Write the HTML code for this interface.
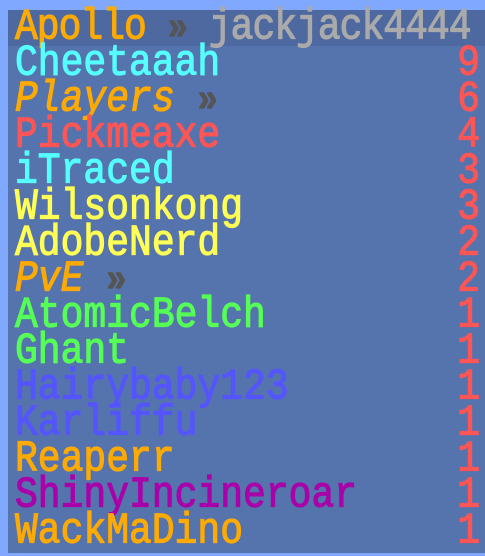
<!DOCTYPE html>
<html><head><style>
html,body{margin:0;padding:0;}
body{width:485px;height:556px;background:#80a8ff;position:relative;overflow:hidden;
font-family:"Liberation Mono","DejaVu Sans Mono",monospace;font-size:38px;}
#p{position:absolute;left:8px;top:10px;width:477px;height:543px;background:#5573ad;}
#h{position:absolute;left:0;top:0;width:477px;height:36px;background:#4e69a0;}
.r{position:absolute;left:7px;right:5px;height:36px;line-height:36px;white-space:nowrap;-webkit-text-stroke:1px currentColor;}
.t{display:inline-block;transform:translateY(2px) scaleY(1.14);transform-origin:50% 80%;}
.n{position:absolute;right:0;top:0;color:#ff5555;}
.i{font-style:italic}
.g{color:#555555;font-size:34px;font-weight:bold}
</style></head><body>
<div id="p">
<div id="h"></div>
<div class="r" style="top:0"><span class="t" style="letter-spacing:-1px"><span style="color:#ffaa00">Apollo</span> <span class="g">»</span> <span style="color:#aaaaaa">jackjack4444</span></span></div>
<div class="r" style="top:36px"><span class="t" style="color:#55ffff">Cheetaaah</span><span class="n t">9</span></div>
<div class="r" style="top:72px"><span class="t i" style="color:#ffaa00">Players <span class="g" style="font-style:normal">»</span></span><span class="n t">6</span></div>
<div class="r" style="top:108px"><span class="t" style="color:#ff5555">Pickmeaxe</span><span class="n t">4</span></div>
<div class="r" style="top:144px"><span class="t" style="color:#55ffff">iTraced</span><span class="n t">3</span></div>
<div class="r" style="top:180px"><span class="t" style="color:#ffff55">Wilsonkong</span><span class="n t">3</span></div>
<div class="r" style="top:216px"><span class="t" style="color:#ffff55">AdobeNerd</span><span class="n t">2</span></div>
<div class="r" style="top:252px"><span class="t i" style="color:#ffaa00">PvE <span class="g" style="font-style:normal">»</span></span><span class="n t">2</span></div>
<div class="r" style="top:288px"><span class="t" style="color:#55ff55">AtomicBelch</span><span class="n t">1</span></div>
<div class="r" style="top:324px"><span class="t" style="color:#55ff55">Ghant</span><span class="n t">1</span></div>
<div class="r" style="top:360px"><span class="t" style="color:#5555ff">Hairybaby123</span><span class="n t">1</span></div>
<div class="r" style="top:396px"><span class="t" style="color:#5555ff">Karliffu</span><span class="n t">1</span></div>
<div class="r" style="top:432px"><span class="t" style="color:#ffaa00">Reaperr</span><span class="n t">1</span></div>
<div class="r" style="top:468px"><span class="t" style="color:#aa00aa">ShinyIncineroar</span><span class="n t">1</span></div>
<div class="r" style="top:504px"><span class="t" style="color:#ffaa00">WackMaDino</span><span class="n t">1</span></div>
</div>
</body></html>
